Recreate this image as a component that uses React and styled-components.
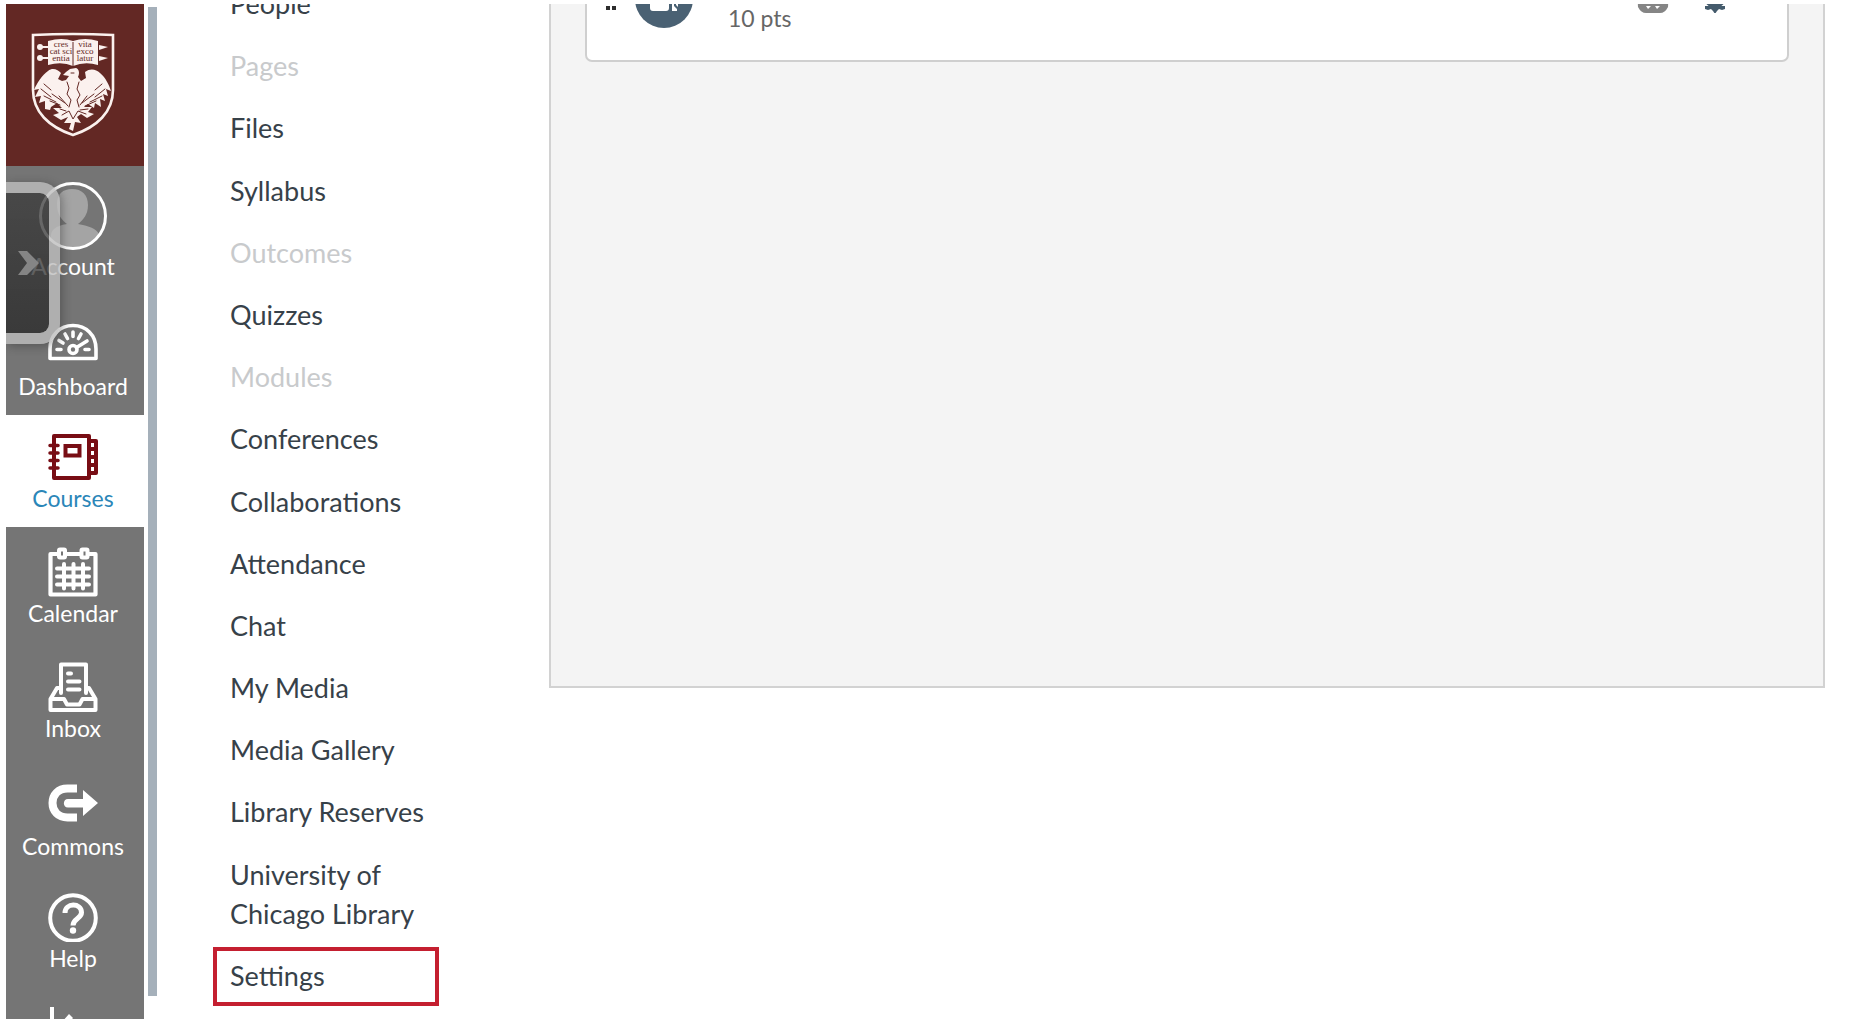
import React from "react";
import styled, { createGlobalStyle } from "styled-components";

const GlobalStyle = createGlobalStyle`
  * {
    box-sizing: border-box;
  }

  body {
    margin: 0;
    background: #ffffff;
    font-family: Lato, "Open Sans", sans-serif;
  }
`;

const Page = styled.div`
  height: 100vh;
  padding: 4px 0 5px 6px;
`;

const Viewport = styled.div`
  display: flex;
  height: 100%;
  overflow: hidden;
`;

/* global navigation */

const Sidebar = styled.nav`
  position: relative;
  flex: 0 0 138px;
  background: #757575;
`;

const Logo = styled.a`
  display: flex;
  justify-content: center;
  height: 162px;
  padding: 28px 4px 0 0;
  background: #632824;
`;

const SideItem = styled.a`
  display: flex;
  flex-direction: column;
  align-items: center;
  gap: ${(props) => (props.$low ? 6 : 3)}px;
  margin-bottom: 3px;
  padding: ${(props) => (props.$low ? "17px 4px 13px 0" : "17px 4px 16px 0")};
  background: ${(props) => (props.$active ? "#ffffff" : "transparent")};
  color: ${(props) => (props.$active ? "#2b86b8" : "#ffffff")};
  font-size: 23px;
  line-height: 26px;
  text-decoration: none;

  svg {
    display: block;
    flex: none;
  }
`;

const AccountItem = styled(SideItem)`
  padding: 16px 4px 18px 0;
`;

const Drawer = styled.button`
  position: absolute;
  top: 178px;
  left: 0;
  display: flex;
  align-items: center;
  width: 54px;
  height: 162px;
  padding: 0 0 0 11px;
  border: 11px solid rgba(190, 190, 190, 0.8);
  border-left: 0;
  border-radius: 0 20px 20px 0;
  background: linear-gradient(rgba(57, 57, 57, 0.75), rgba(41, 41, 41, 0.78)) padding-box;
  box-shadow: 2px 2px 10px rgba(40, 40, 40, 0.4);
`;

const Divider = styled.div`
  flex: 0 0 9px;
  margin: 3px 0 23px 4px;
  background: #a5b0ba;
`;

/* course navigation */

const CourseNav = styled.nav`
  display: flex;
  flex: 0 0 226px;
  flex-direction: column;
  justify-content: space-between;
  margin: -29px 0 13px 56px;
`;

const CourseLink = styled.a`
  padding: 5px 4px 7px 13px;
  border: 4px solid ${(props) => (props.$marked ? "#c41f30" : "transparent")};
  color: ${(props) => (props.$muted ? "#c8cacc" : "#374149")};
  font-size: 27px;
  line-height: 39px;
  text-decoration: none;
`;

/* assignment list */

const Content = styled.main`
  flex: 1;
  min-width: 0;
  padding: 0 45px 0 110px;
`;

const Panel = styled.section`
  display: flow-root;
  min-height: 684px;
  padding: 0 34px;
  border: 2px solid #d2d2d2;
  border-top: 0;
  background: #f4f4f4;
`;

const Card = styled.article`
  display: flex;
  align-items: flex-start;
  height: 94px;
  margin-top: -36px;
  padding: 0 57px 0 16px;
  border: 2px solid #cfcfcf;
  border-radius: 7px;
  background: #ffffff;
`;

const Handle = styled.button`
  display: block;
  margin: 12px 15px 0 0;
  padding: 0;
  border: 0;
  background: none;

  svg {
    display: block;
  }
`;

const Points = styled.p`
  flex: 1;
  margin: 35px 0 0 34px;
  color: #666666;
  font-size: 23px;
  line-height: 26px;
`;

const RowButton = styled.button`
  margin: 7px 0 0 30px;
  padding: 0;
  border: 0;
  background: none;

  svg {
    display: block;
  }
`;

const Crest = () => (
  <svg width="84" height="106" viewBox="0 0 84 106" role="img" aria-label="University of Chicago">
    <path d="M2 3Q42 1 82 3V58C82 80 66 95 42 103C18 95 2 80 2 58Z" fill="#632824" stroke="#fbf1ee" strokeWidth="2.6" />
    <g fill="#fbf1ee">
      <path d="M17 9Q31 5 42 9Q54 5 67 9V33Q54 29 42 34Q31 29 17 33Z" />
      <circle cx="9" cy="15" r="3" />
      <circle cx="9" cy="26" r="3" />
      <path d="M11 14H17V16H11ZM11 25H17V27H11ZM68 13L77 15L68 18ZM68 24L77 26L68 29Z" />
      <path d="M39 37L45 36C48 37 49 41 47 45L50 49L55 46L54 40C59 36 65 37 69 41C75 46 78 53 80 59L75 57L77 64L72 62L74 69L69 67L70 75L64 71L63 76L57 72L53 75L61 75L57 80L63 82L56 86L50 82L46 85L50 91L44 90L42 99L38 97L40 91L33 91L37 85L30 88L22 83L28 81L22 76L31 76L26 71L20 75L19 78L14 77L14 69L8 71L10 64L4 65L8 57L3 58C6 51 11 43 17 39C22 35 27 38 30 41L27 47L31 49L35 48L38 44L32 43L35 40Z" />
    </g>
    <path d="M42 10V34" stroke="#632824" strokeWidth="1" />
    <g fill="none" stroke="#632824" strokeWidth="1" strokeLinecap="round">
      <path d="M36 50L38 56L36 62L40 68L38 75M48 50L46 57L49 63L46 68L48 75M13 52L20 58M10 57L20 65M13 64L25 70M19 69L29 73M21 62L34 71M28 64L37 74M71 52L64 58M74 57L64 65M71 64L59 70M65 69L54 74M63 62L51 71M56 64L49 73M31 83L38 79L42 87L47 79L55 82M35 79L29 77M49 78L57 77M40 41H43" />
    </g>
    <g fill="#632824" fontFamily="Liberation Serif, serif" fontSize="9" textAnchor="middle">
      <text x="30" y="15">cres</text>
      <text x="30" y="22">cat sci</text>
      <text x="30" y="29">entia</text>
      <text x="54" y="15">vita</text>
      <text x="54" y="22">exco</text>
      <text x="54" y="29">latur</text>
    </g>
  </svg>
);

const AvatarIcon = () => (
  <svg width="68" height="68" viewBox="0 0 68 68" aria-hidden="true">
    <path d="M12 57C11 48 16 44 28 42C23 38 18 33 18 22C18 12 24 7 33 7C43 7 49 13 49 23C49 33 44 38 39 42C49 44 57 46 60 52C53 62 43 66 34 66C25 66 17 63 12 57Z" fill="#a4a4a4" />
    <circle cx="34" cy="34" r="32.5" fill="none" stroke="#ffffff" strokeWidth="3" />
  </svg>
);

const DashboardIcon = () => (
  <svg width="50" height="50" viewBox="0 0 50 50" fill="none" stroke="#ffffff" strokeWidth="3.6" aria-hidden="true">
    <path d="M2 41.5V32C2 18 12 8.5 25 8.5S48 18 48 32V41.5Z" strokeLinejoin="round" />
    <circle cx="25" cy="32.5" r="4" />
    <path d="M28.5 30.5L39 24M9 32.5H13M37 32.5H41M11 23.5L15 26M17 17L19.5 21.5M25 15V19.5M33 17L30.5 21.5" strokeLinecap="round" />
  </svg>
);

const CoursesIcon = () => (
  <svg width="50" height="50" viewBox="0 0 50 50" fill="none" stroke="#780d14" strokeWidth="4" aria-hidden="true">
    <path d="M6 4H41V46H6Z" strokeLinejoin="round" />
    <rect x="17.5" y="14" width="14" height="9.5" />
    <path d="M41 9H48V41H41M41 17H48M41 25H48M41 33H48" strokeLinejoin="round" />
    <path d="M2 13.5H10M2 21H10M2 28.5H10M2 36H10" strokeLinecap="round" strokeWidth="3.5" />
  </svg>
);

const CalendarIcon = () => (
  <svg width="50" height="50" viewBox="0 0 50 50" fill="none" stroke="#ffffff" strokeWidth="4.2" aria-hidden="true">
    <path d="M10 7H2.5V47.5H47.5V7H41M18 7H33" strokeLinejoin="round" />
    <rect x="11" y="2.5" width="6" height="8" rx="1" strokeWidth="4" />
    <rect x="33.5" y="2.5" width="6" height="8" rx="1" strokeWidth="4" />
    <path d="M9 21.5H41M9 29.5H41M9 37.5H41M16 17V41.5M25.5 17V41.5M35 17V41.5" strokeLinecap="round" strokeWidth="4" />
  </svg>
);

const InboxIcon = () => (
  <svg width="50" height="50" viewBox="0 0 50 50" fill="none" stroke="#ffffff" strokeWidth="4" strokeLinejoin="round" strokeLinecap="round" aria-hidden="true">
    <path d="M13 31V2.5H38V31" />
    <path d="M12 26H9L2.5 37V48H47.5V37L41 26H39M2.5 37H16L19 42.5H31.5L34.5 37H47.5" />
    <path d="M20 11.5H23M20 19.5H31.5M20 27.5H31.5" strokeWidth="4" />
  </svg>
);

const CommonsIcon = () => (
  <svg width="50" height="50" viewBox="0 0 50 50" aria-hidden="true">
    <path d="M29 11.5H19.5C10 11.5 4.5 18 4.5 26S10 40.5 19.5 40.5H29" fill="none" stroke="#ffffff" strokeWidth="8" />
    <path d="M20 22H35V13L50 26L35 39V30.5H20C14.5 30.5 14.5 22 20 22Z" fill="#ffffff" />
  </svg>
);

const HelpIcon = () => (
  <svg width="50" height="50" viewBox="0 0 50 50" fill="none" stroke="#ffffff" aria-hidden="true">
    <circle cx="25" cy="26" r="22.8" strokeWidth="4" />
    <path d="M17 21C17 10.5 33.5 10.5 33.5 20.5C33.5 26.5 25 26.5 25 33.5" strokeWidth="5" />
    <circle cx="25" cy="38.5" r="3.2" fill="#ffffff" stroke="none" />
  </svg>
);

const CollapseIcon = () => (
  <svg width="50" height="50" viewBox="0 0 50 50" fill="#ffffff" aria-hidden="true">
    <path d="M2 0H6V50H2ZM21 7L25 11L14 24H48V29H14L25 42L21 46L6 27V24Z" />
    <path d="M6 11H15V20L6 30Z" fill="#757575" />
  </svg>
);

const navItems = [
  { label: "Dashboard", icon: <DashboardIcon />, low: true },
  { label: "Courses", icon: <CoursesIcon />, active: true },
  { label: "Calendar", icon: <CalendarIcon /> },
  { label: "Inbox", icon: <InboxIcon /> },
  { label: "Commons", icon: <CommonsIcon />, low: true },
  { label: "Help", icon: <HelpIcon /> },
];

const courseLinks = [
  { label: "People" },
  { label: "Pages", muted: true },
  { label: "Files" },
  { label: "Syllabus" },
  { label: "Outcomes", muted: true },
  { label: "Quizzes" },
  { label: "Modules", muted: true },
  { label: "Conferences" },
  { label: "Collaborations" },
  { label: "Attendance" },
  { label: "Chat" },
  { label: "My Media" },
  { label: "Media Gallery" },
  { label: "Library Reserves" },
  { label: "University of Chicago Library" },
  { label: "Settings", marked: true },
];

function App() {
  return (
    <Page>
      <GlobalStyle />
      <Viewport>
        <Sidebar aria-label="Global navigation">
          <Logo href="#home">
            <Crest />
          </Logo>
          <AccountItem href="#account">
            <AvatarIcon />
            Account
          </AccountItem>
          {navItems.map((item) => (
            <SideItem key={item.label} href={`#${item.label}`} $active={item.active} $low={item.low}>
              {item.icon}
              {item.label}
            </SideItem>
          ))}
          <SideItem href="#collapse" aria-label="Collapse navigation">
            <CollapseIcon />
          </SideItem>
          <Drawer type="button" aria-label="Open drawer">
            <svg width="24" height="28" viewBox="0 0 24 28" aria-hidden="true">
              <path d="M1 2H10L22 14L10 26H1L10 14Z" fill="#858585" />
            </svg>
          </Drawer>
        </Sidebar>
        <Divider />
        <CourseNav aria-label="Course navigation">
          {courseLinks.map((link) => (
            <CourseLink key={link.label} href={`#${link.label}`} $muted={link.muted} $marked={link.marked}>
              {link.label}
            </CourseLink>
          ))}
        </CourseNav>
        <Content>
          <Panel>
            <Card>
              <Handle type="button" aria-label="Move assignment">
                <svg width="16" height="32" viewBox="0 0 16 32" fill="#2d2d2d">
                  <path d="M3 4H7V8H3ZM9 4H13V8H9ZM3 14H7V18H3ZM9 14H13V18H9ZM3 24H7V28H3ZM9 24H13V28H9Z" />
                </svg>
              </Handle>
              <svg width="60" height="60" viewBox="0 0 60 60" aria-hidden="true">
                <circle cx="30" cy="29" r="29" fill="#4a6173" />
                <path d="M16 18H35V38Q35 41 32 41H19Q16 41 16 38ZM38 22H40V36L43 39V41H38ZM42 22H44V37L42 35Z" fill="#ffffff" />
              </svg>
              <Points>10 pts</Points>
              <RowButton type="button" aria-label="Published">
                <svg width="34" height="36" viewBox="0 0 34 36">
                  <path d="M8 9H26Q33 18 32 30Q29 36 24 36H10Q5 36 2 30Q1 18 8 9Z" fill="#858585" />
                  <path d="M10 29L12 32L15 29ZM19 29L21 32L24 29Z" fill="#ffffff" />
                </svg>
              </RowButton>
              <RowButton type="button" aria-label="Settings">
                <svg width="30" height="36" viewBox="0 0 30 36" fill="#445b6c">
                  <circle cx="15" cy="20" r="11" />
                  <path d="M5 29H25V32L22 33L19 32L17 34L15 37L13 34L11 32L8 33L5 32Z" />
                </svg>
              </RowButton>
            </Card>
          </Panel>
        </Content>
      </Viewport>
    </Page>
  );
}

export default App;
